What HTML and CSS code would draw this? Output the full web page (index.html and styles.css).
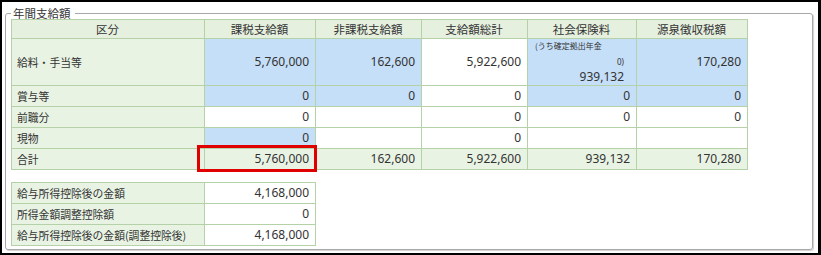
FILE: index.html
```html
<!DOCTYPE html>
<html lang="ja">
<head>
<meta charset="utf-8">
<link rel="stylesheet" href="styles.css">
</head>
<body>
<div class="frame">
  <fieldset class="group">
    <legend class="group-title">年間支給額</legend>
    <table class="grid main">
      <colgroup>
        <col class="c-label"><col class="c1"><col class="c2"><col class="c3"><col class="c4"><col class="c5">
      </colgroup>
      <tr class="head">
        <th>区分</th><th>課税支給額</th><th>非課税支給額</th><th>支給額総計</th><th>社会保険料</th><th>源泉徴収税額</th>
      </tr>
      <tr class="tall">
        <td class="label">給料・手当等</td>
        <td class="num blue">5,760,000</td>
        <td class="num blue">162,600</td>
        <td class="num">5,922,600</td>
        <td class="num blue social">
          <div class="note">(うち確定拠出年金</div>
          <div class="note-val">0)</div>
          <div class="social-val">939,132</div>
        </td>
        <td class="num blue">170,280</td>
      </tr>
      <tr>
        <td class="label">賞与等</td>
        <td class="num blue">0</td>
        <td class="num blue">0</td>
        <td class="num">0</td>
        <td class="num blue">0</td>
        <td class="num blue">0</td>
      </tr>
      <tr>
        <td class="label">前職分</td>
        <td class="num">0</td>
        <td class="num"></td>
        <td class="num">0</td>
        <td class="num">0</td>
        <td class="num">0</td>
      </tr>
      <tr>
        <td class="label">現物</td>
        <td class="num blue">0</td>
        <td class="num"></td>
        <td class="num">0</td>
        <td class="num"></td>
        <td class="num"></td>
      </tr>
      <tr class="total">
        <td class="label">合計</td>
        <td class="num highlight"><span class="mark"></span>5,760,000</td>
        <td class="num">162,600</td>
        <td class="num">5,922,600</td>
        <td class="num">939,132</td>
        <td class="num">170,280</td>
      </tr>
    </table>
    <table class="grid sub">
      <colgroup><col class="c-label"><col class="c1"></colgroup>
      <tr><td class="label">給与所得控除後の金額</td><td class="num">4,168,000</td></tr>
      <tr><td class="label">所得金額調整控除額</td><td class="num">0</td></tr>
      <tr><td class="label">給与所得控除後の金額(調整控除後)</td><td class="num">4,168,000</td></tr>
    </table>
  </fieldset>
</div>
</body>
</html>
```

FILE: styles.css
```css
html, body {
  margin: 0;
  padding: 0;
  background: #fff;
}
body {
  font-family: "Noto Sans", "Noto Sans CJK JP", sans-serif;
  font-size: 12px;
  color: #333;
}
.frame {
  box-sizing: border-box;
  width: 821px;
  height: 255px;
  border-style: solid;
  border-color: #000;
  border-width: 2px 3px 2px 2px;
  padding: 4px 5px 0 3px;
}
.group {
  margin: 0;
  box-sizing: border-box;
  height: 244px;
  border: 1px solid #a8a8a8;
  border-radius: 3px;
  box-shadow: 1px 1px 1px #d0d0d0;
  padding: 0 0 0 5px;
}
.group-title {
  padding: 0 4px 0 2px;
  font-family: "Noto Sans CJK JP", sans-serif;
  font-size: 11.5px;
  line-height: 14px;
  color: #333;
}
.grid {
  border-collapse: collapse;
  table-layout: fixed;
}
.grid td, .grid th {
  border: 1px solid #b5d1a8;
  padding: 0 6px 0 5px;
  height: 20px;
  line-height: 14px;
  white-space: nowrap;
  overflow: visible;
}
.main { width: 737px; margin-top: -1px; }
.sub { width: 301px; margin-top: 12px; }
.c-label { width: 193px; }
.c1 { width: 111px; }
.c2 { width: 106px; }
.c3 { width: 106px; }
.c4 { width: 109px; }
.c5 { width: 111px; }
.head th {
  background: #e6f0df;
  font-family: "Noto Sans CJK JP", sans-serif;
  font-weight: normal;
  font-size: 11.5px;
  height: 18px;
  text-align: center;
}
.label {
  background: #e9f3e4;
  text-align: left;
  font-family: "Noto Sans CJK JP", sans-serif;
  font-size: 10.8px;
}
.num { text-align: right; background: #fff; }
.blue { background: #c5dff8; }
.total td { background: #e9f3e4; }
.tall td { height: 46px; }
.social {
  padding: 0;
  vertical-align: top;
}
.note {
  text-align: left;
  font-family: "Noto Sans CJK JP", sans-serif;
  font-size: 8px;
  line-height: 10px;
  padding: 2px 0 0 2px;
}
.note-val {
  font-size: 8px;
  line-height: 12px;
  padding: 5px 6px 0 0;
}
.social-val {
  line-height: 16px;
  padding: 1px 6px 0 0;
}
.highlight { position: relative; }
.mark {
  position: absolute;
  left: -8px;
  top: -4px;
  right: -2px;
  bottom: -3px;
  border: 3px solid #e00000;
}
```
